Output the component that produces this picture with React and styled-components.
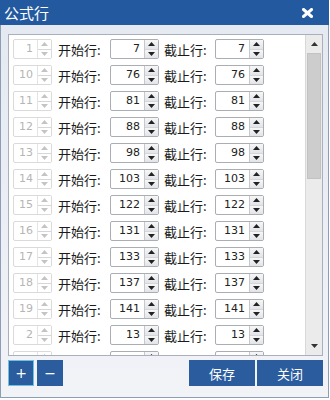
import React from "react";
import styled, { createGlobalStyle } from "styled-components";

const rows = [
  [1, 7, 7],
  [10, 76, 76],
  [11, 81, 81],
  [12, 88, 88],
  [13, 98, 98],
  [14, 103, 103],
  [15, 122, 122],
  [16, 131, 131],
  [17, 133, 133],
  [18, 137, 137],
  [19, 141, 141],
  [2, 13, 13],
  [3, 20, 20],
];

function Arrow({ up, color }) {
  return (
    <svg width="7" height="4" viewBox="0 0 7 4">
      <path d={up ? "M0 4 L3.5 0 L7 4 Z" : "M0 0 L3.5 4 L7 0 Z"} fill={color} />
    </svg>
  );
}

function Spinner({ value, disabled, width }) {
  const c = disabled ? "#c4c4c4" : "#222";
  return (
    <SpinBox $disabled={disabled} $width={width}>
      <SpinValue $disabled={disabled}>{value}</SpinValue>
      <SpinButtons $disabled={disabled}>
        <SpinHalf $disabled={disabled}>
          <Arrow up color={c} />
        </SpinHalf>
        <SpinHalf $disabled={disabled}>
          <Arrow color={c} />
        </SpinHalf>
      </SpinButtons>
    </SpinBox>
  );
}

export default function App() {
  return (
    <>
      <GlobalStyle />
      <Window>
        <TitleBar>
          <Title>公式行</Title>
          <svg width="11" height="10" viewBox="0 0 11 10">
            <path d="M1.5 1.5 L9.5 8.5 M9.5 1.5 L1.5 8.5" stroke="#fff" strokeWidth="3" strokeLinecap="square" />
          </svg>
        </TitleBar>
        <Body>
          <Panel>
            <List>
              {rows.map((r, i) => (
                <Row key={i}>
                  <Spinner value={r[0]} disabled width={39} />
                  <Label $first>开始行:</Label>
                  <Spinner value={r[1]} width={49} />
                  <Label>截止行:</Label>
                  <Spinner value={r[2]} width={49} />
                </Row>
              ))}
            </List>
            <ScrollBar>
              <ScrollBtn>
                <Arrow up color="#333" />
              </ScrollBtn>
              <Track>
                <Thumb />
              </Track>
              <ScrollBtn>
                <Arrow color="#333" />
              </ScrollBtn>
            </ScrollBar>
          </Panel>
          <Footer>
            <Group>
              <SmallBtn $focused>+</SmallBtn>
              <SmallBtn>−</SmallBtn>
            </Group>
            <Group $gap={2}>
              <WideBtn>保存</WideBtn>
              <WideBtn>关闭</WideBtn>
            </Group>
          </Footer>
        </Body>
      </Window>
    </>
  );
}

const GlobalStyle = createGlobalStyle`
  html, body {
    margin: 0;
    padding: 0;
    background: #ffffff;
  }
  * {
    box-sizing: border-box;
  }
`;

const Window = styled.div`
  width: 329px;
  height: 398px;
  display: flex;
  flex-direction: column;
  border: 1px solid #8d9db3;
  border-top: none;
  background: linear-gradient(#e4e9f1, #f1f3f7);
  font-family: "Noto Sans CJK SC", "DejaVu Sans", sans-serif;
`;

const TitleBar = styled.div`
  height: 25px;
  margin: 0 -1px;
  background: #235a9f;
  display: flex;
  align-items: center;
  justify-content: space-between;
  padding: 0 16px 0 4px;
`;

const Title = styled.span`
  color: #fff;
  font-size: 15px;
  line-height: 25px;
`;

const Body = styled.div`
  flex: 1;
  padding: 9px 5px 0 7px;
  display: flex;
  flex-direction: column;
`;

const Panel = styled.div`
  height: 322px;
  border: 1px solid #a9b0bb;
  background: #fff;
  display: flex;
  overflow: hidden;
`;

const List = styled.div`
  flex: 1;
  padding: 1px 0 0 4px;
  overflow: hidden;
`;

const Row = styled.div`
  height: 26px;
  display: flex;
  align-items: center;
`;

const Label = styled.span`
  width: ${(p) => (p.$first ? 52 : 51)}px;
  margin-left: ${(p) => (p.$first ? 6 : 5)}px;
  font-size: 13px;
  color: #1a1a1a;
  white-space: nowrap;
`;

const SpinBox = styled.div`
  width: ${(p) => p.$width}px;
  height: 20px;
  display: flex;
  border: 1px solid ${(p) => (p.$disabled ? "#dadada" : "#a9adb4")};
  border-radius: 2px;
  background: #fff;
`;

const SpinValue = styled.div`
  flex: 1;
  text-align: right;
  padding-right: 4px;
  font-family: "DejaVu Sans", sans-serif;
  font-size: 11px;
  line-height: 18px;
  color: ${(p) => (p.$disabled ? "#b5b5b5" : "#222")};
`;

const SpinButtons = styled.div`
  width: 14px;
  display: flex;
  flex-direction: column;
  border-left: 1px solid ${(p) => (p.$disabled ? "#e4e4e4" : "#c5c8cd")};
`;

const SpinHalf = styled.div`
  flex: 1;
  display: flex;
  align-items: center;
  justify-content: center;
  background: ${(p) =>
    p.$disabled ? "#fff" : "linear-gradient(#f7f7f7, #e2e4e8)"};
  & + & {
    border-top: 1px solid ${(p) => (p.$disabled ? "#f0f0f0" : "#d4d6da")};
  }
`;

const ScrollBar = styled.div`
  width: 17px;
  display: flex;
  flex-direction: column;
  background: #ebebeb;
  border-left: 1px solid #d8d8d8;
`;

const ScrollBtn = styled.div`
  height: 18px;
  display: flex;
  align-items: center;
  justify-content: center;
`;

const Track = styled.div`
  flex: 1;
  padding: 0 1px;
`;

const Thumb = styled.div`
  height: 126px;
  background: #cdcdcd;
  border: 1px solid #c2c2c2;
`;

const Footer = styled.div`
  margin-top: 4px;
  display: flex;
  justify-content: space-between;
`;

const Group = styled.div`
  display: flex;
  gap: ${(p) => p.$gap || 3}px;
`;

const SmallBtn = styled.div`
  width: 26px;
  height: 26px;
  background: #2a5c9e;
  border: 1px solid ${(p) => (p.$focused ? "#6cc0e0" : "#2a5c9e")};
  color: #fff;
  display: flex;
  align-items: center;
  justify-content: center;
  font-family: "DejaVu Sans", sans-serif;
  font-size: 14px;
`;

const WideBtn = styled.div`
  width: 66px;
  height: 26px;
  background: #2a5c9e;
  color: #fff;
  display: flex;
  align-items: center;
  justify-content: center;
  font-size: 13px;
`;
